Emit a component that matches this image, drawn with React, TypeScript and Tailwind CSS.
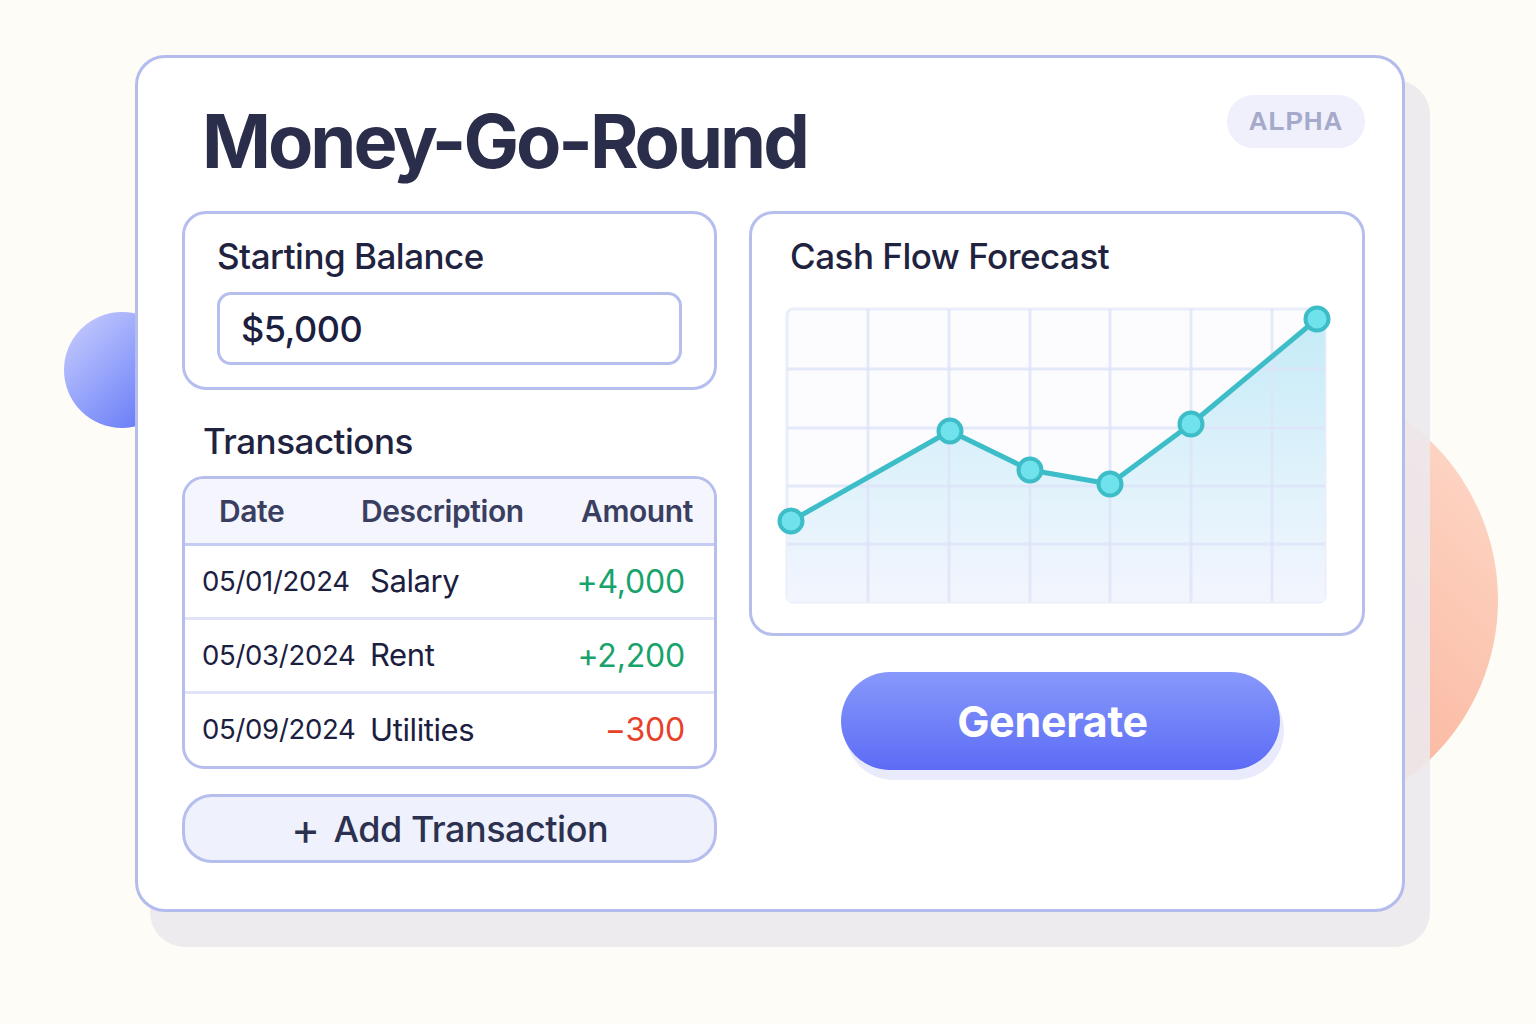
import React from "react";

const rows = [
  { date: "05/01/2024", desc: "Salary", amount: "+4,000", positive: true },
  { date: "05/03/2024", desc: "Rent", amount: "+2,200", positive: true },
  { date: "05/09/2024", desc: "Utilities", amount: "\u2212300", positive: false },
];

const points: [number, number][] = [
  [16, 221],
  [175, 131],
  [255, 170],
  [335, 184],
  [416, 124],
  [542, 19],
];

function ForecastChart() {
  const cols = [93, 174, 255, 335, 416, 497];
  const gridRows = [69, 128, 186, 244];
  const line = points.map(([x, y], i) => `${i === 0 ? "M" : "L"}${x},${y}`).join(" ");
  const area = `${line} L550,19 L550,302 L12,302 L12,223 Z`;

  return (
    <svg width="560" height="312" viewBox="0 0 560 312" className="block">
      <defs>
        <linearGradient id="areaFill" x1="0" y1="0" x2="0" y2="1">
          <stop offset="0" stopColor="#c5ebf7" />
          <stop offset="0.55" stopColor="#dff2fb" />
          <stop offset="1" stopColor="#f3f5fe" />
        </linearGradient>
      </defs>
      <rect x="12" y="9" width="538" height="293" rx="6" fill="#fcfcff" stroke="#eaedfa" strokeWidth="3" />
      <path d={area} fill="url(#areaFill)" />
      {cols.map((x) => (
        <line key={x} x1={x} y1="9" x2={x} y2="302" stroke="#dde3f7" strokeOpacity="0.8" strokeWidth="3" />
      ))}
      {gridRows.map((y) => (
        <line key={y} x1="12" y1={y} x2="550" y2={y} stroke="#dde3f7" strokeOpacity="0.8" strokeWidth="3" />
      ))}
      <path d={line} fill="none" stroke="#3dbdc7" strokeWidth="5" strokeLinejoin="round" strokeLinecap="round" />
      {points.map(([x, y]) => (
        <circle key={x} cx={x} cy={y} r="11.5" fill="#6fe2ec" stroke="#3dbdc7" strokeWidth="4" />
      ))}
    </svg>
  );
}

export default function App() {
  return (
    <div className="relative w-[1536px] h-[1024px] overflow-hidden bg-[#fdfcf7] font-['Inter',sans-serif]">
      {/* decorative blobs behind the card */}
      <div className="absolute left-[64px] top-[312px] w-[116px] h-[116px] rounded-full bg-linear-to-br from-[#ccd0fc] to-[#5a68f4]" />
      <div className="absolute left-[1056px] top-[379px] w-[442px] h-[442px] rounded-full bg-linear-to-bl from-[#fddccd] via-[#fbbca5] to-[#f6906f]" />

      <div className="relative pt-[55px] pl-[135px]">
        <div className="w-[1270px] h-[857px] rounded-[30px] border-[3px] border-[#b4bcee] bg-white shadow-[20px_30px_0_5px_rgba(236,232,238,0.88)] pl-[44px] pr-[37px] pt-[37px]">
          {/* header */}
          <div className="flex items-start justify-between">
            <h1 className="mt-[9px] ml-[20px] text-[74px] leading-none font-bold tracking-[-3px] text-[#2a2e4a]">
              Money-Go-Round
            </h1>
            <span className="h-[53px] w-[138px] rounded-full bg-[#eff0fb] flex items-center justify-center font-['Liberation_Sans',sans-serif] font-bold text-[26px] tracking-[1px] text-[#a5aacb]">
              ALPHA
            </span>
          </div>

          <div className="mt-[33px] flex gap-[32px]">
            {/* left column */}
            <div className="w-[535px] flex flex-col">
              <div className="h-[179px] rounded-[24px] border-[3px] border-[#b6beee] px-[32px] pt-[25px]">
                <div className="text-[35px] leading-none font-medium tracking-[-0.5px] text-[#1f2340]">Starting Balance</div>
                <div className="mt-[18px] h-[73px] rounded-[14px] border-[3px] border-[#b6beee] flex items-center pl-[21px] text-[36px] font-medium tracking-[-0.5px] text-[#1c2040]">
                  $5,000
                </div>
              </div>

              <div className="mt-[34px] ml-[21px] text-[35px] leading-none font-medium tracking-[-0.5px] text-[#1f2340]">
                Transactions
              </div>

              <div className="mt-[17px] rounded-[22px] border-[3px] border-[#b6beee] overflow-hidden">
                <div className="h-[67px] bg-[#f4f5fd] border-b-[3px] border-[#c5ccf3] grid grid-cols-[142px_1fr_auto] items-center pl-[34px] pr-[21px] text-[30px] font-semibold tracking-[-0.4px] text-[#3a3f61]">
                  <span>Date</span>
                  <span>Description</span>
                  <span>Amount</span>
                </div>
                {rows.map((r, i) => (
                  <div
                    key={r.date}
                    className={
                      "grid grid-cols-[168px_1fr_auto] items-center pl-[17px] pr-[29px] " +
                      (i < rows.length - 1 ? "h-[74px] border-b-[3px] border-[#e0e4f9]" : "h-[72px]")
                    }
                  >
                    <span className="text-[27.5px] tracking-[-0.3px] text-[#1c2040]">{r.date}</span>
                    <span className="text-[31px] tracking-[-0.4px] text-[#1c2040]">{r.desc}</span>
                    <span className={"text-[32px] tracking-[-0.2px] " + (r.positive ? "text-[#17a36b]" : "text-[#e8412b]")}>
                      {r.amount}
                    </span>
                  </div>
                ))}
              </div>

              <button className="mt-[25px] h-[69px] rounded-[30px] border-[3px] border-[#b6beee] bg-[#eff1fc] flex items-center justify-center gap-[14px] text-[36px] font-medium tracking-[-0.5px] text-[#2d3150]">
                <span className="text-[44px] leading-none font-normal">+</span>
                <span>Add Transaction</span>
              </button>
            </div>

            {/* right column */}
            <div className="w-[616px] flex flex-col">
              <div className="h-[425px] rounded-[24px] border-[3px] border-[#b6beee] pt-[25px]">
                <div className="pl-[38px] text-[35px] leading-none font-medium tracking-[-0.5px] text-[#1f2340]">
                  Cash Flow Forecast
                </div>
                <div className="mt-[26px] ml-[23px]">
                  <ForecastChart />
                </div>
              </div>

              <button className="mt-[36px] ml-[92px] w-[439px] h-[98px] rounded-full bg-linear-to-b from-[#8898fb] to-[#5d6bf5] shadow-[4px_10px_0_0_#e9ebfc] pr-[16px] text-white text-[43px] font-bold tracking-[-0.3px]">
                Generate
              </button>
            </div>
          </div>
        </div>
      </div>
    </div>
  );
}
